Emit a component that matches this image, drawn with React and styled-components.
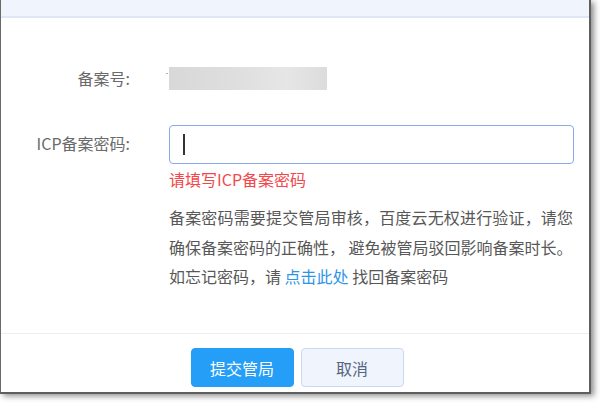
import React from 'react';
import styled, { createGlobalStyle } from 'styled-components';

const GlobalStyle = createGlobalStyle`
  html, body {
    margin: 0;
    padding: 0;
    background: #ffffff;
  }
  body {
    font-family: "Noto Sans CJK SC", "Noto Sans", sans-serif;
    width: 600px;
    height: 404px;
    overflow: hidden;
  }
`;

const Window = styled.div`
  box-sizing: border-box;
  width: 591px;
  height: 394px;
  background: #ffffff;
  border-left: 1px solid #6a6a6a;
  border-right: 2px solid #5e5e5e;
  border-bottom: 2px solid #5e5e5e;
  box-shadow: 3px 2px 6px rgba(0, 0, 0, 0.45);
  display: flex;
  flex-direction: column;
`;

const TopBar = styled.div`
  height: 16px;
  flex-shrink: 0;
  background: #eff4fd;
  border-bottom: 2px solid #dfe6f6;
`;

const Body = styled.div`
  flex: 1;
  padding: 48px 16px 0 0;
`;

const Row = styled.div`
  display: grid;
  grid-template-columns: 129px 1fr;
  column-gap: 39px;
  align-items: ${p => (p.$top ? 'start' : 'center')};
  margin-bottom: ${p => p.$gap || 0}px;
`;

const Label = styled.div`
  text-align: right;
  font-size: 16px;
  color: #6a6a6a;
  line-height: 24px;
  white-space: nowrap;
  margin-top: ${p => p.$offset || 0}px;
`;

const Masked = styled.div`
  position: relative;
  width: 158px;
  height: 23px;
  background: linear-gradient(90deg, #d8d8d8 0%, #dedede 40%, #e6e6e6 75%, #dcdcdc 100%);

  &::before {
    content: '';
    position: absolute;
    left: -3px;
    top: 6px;
    width: 2px;
    height: 1px;
    background: #b0b0b0;
  }
`;

const InputBox = styled.div`
  box-sizing: border-box;
  width: 405px;
  height: 39px;
  border: 1px solid #8aa9ea;
  border-radius: 4px;
  display: flex;
  align-items: center;
  padding-left: 13px;
`;

const Caret = styled.span`
  width: 2px;
  height: 21px;
  background: #333333;
`;

const Error = styled.div`
  font-size: 16px;
  color: #f2474c;
  line-height: 24px;
  margin-top: 3px;
`;

const Desc = styled.div`
  margin-top: 12px;
  width: 404px;
  font-size: 16px;
  color: #585858;
`;

const Line = styled.div`
  line-height: 29.5px;
  white-space: nowrap;
  text-align: ${p => (p.$justify ? 'justify' : 'left')};
  text-align-last: ${p => (p.$justify ? 'justify' : 'auto')};
`;

const Link = styled.a`
  color: #2c95e8;
  text-decoration: none;
  cursor: pointer;
`;

const Footer = styled.div`
  border-top: 1px solid #eeeeee;
  display: flex;
  justify-content: center;
  gap: 7px;
  padding: 14px 0 0 4px;
  height: 44px;
`;

const Button = styled.button`
  box-sizing: border-box;
  width: 103px;
  height: 39px;
  border-radius: 4px;
  font-family: inherit;
  font-size: 16px;
  cursor: pointer;
  background: ${p => (p.$primary ? '#249ef6' : '#eff4fd')};
  color: ${p => (p.$primary ? '#ffffff' : '#56657f')};
  border: 1px solid ${p => (p.$primary ? '#249ef6' : '#cbd8f1')};
`;

export default function App() {
  return (
    <>
      <GlobalStyle />
      <Window>
        <TopBar />
        <Body>
          <Row $gap={35}>
            <Label>备案号:</Label>
            <Masked />
          </Row>
          <Row $top>
            <Label $offset={6}>ICP备案密码:</Label>
            <div>
              <InputBox>
                <Caret />
              </InputBox>
              <Error>请填写ICP备案密码</Error>
              <Desc>
                <Line $justify>备案密码需要提交管局审核，百度云无权进行验证，请您</Line>
                <Line>确保备案密码的正确性， 避免被管局驳回影响备案时长。</Line>
                <Line>
                  如忘记密码，请 <Link>点击此处</Link> 找回备案密码
                </Line>
              </Desc>
            </div>
          </Row>
        </Body>
        <Footer>
          <Button $primary>提交管局</Button>
          <Button>取消</Button>
        </Footer>
      </Window>
    </>
  );
}
